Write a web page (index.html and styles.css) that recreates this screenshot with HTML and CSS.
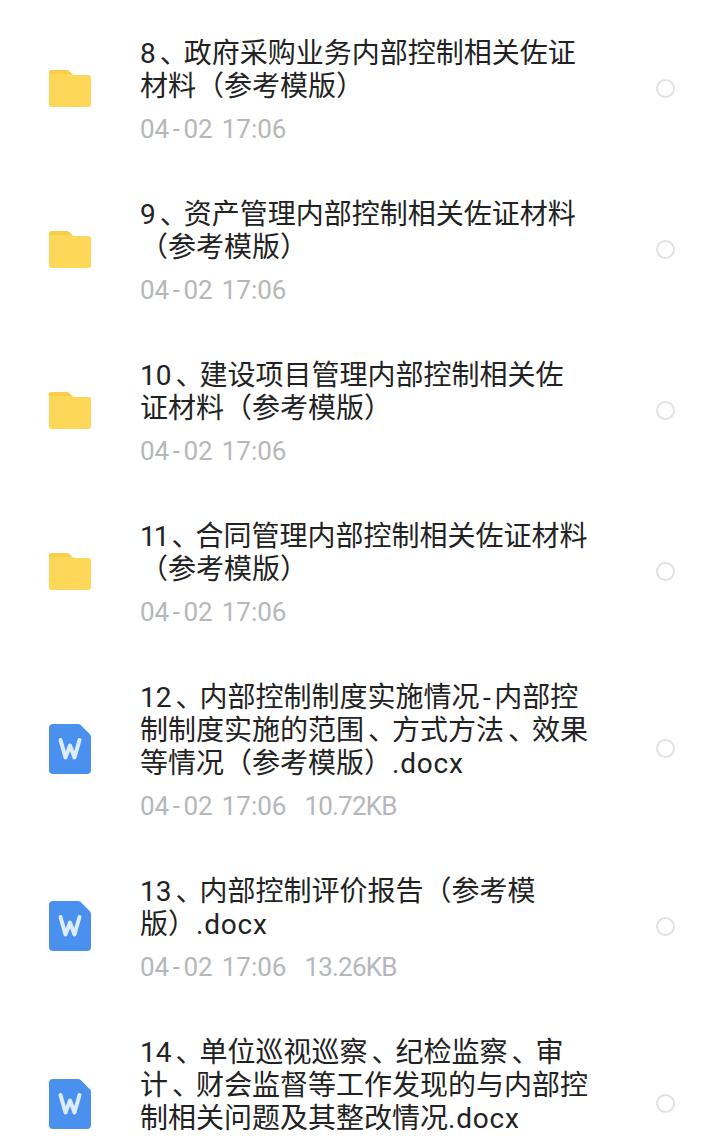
FILE: index.html
```html
<!DOCTYPE html>
<html lang="zh-CN">
<head>
    <meta charset="UTF-8">
    <meta name="viewport" content="width=device-width, initial-scale=1.0">
    <title>文件列表</title>
    <link rel="stylesheet" href="styles.css">
</head>
<body>
    <svg class="defs" width="0" height="0" aria-hidden="true">
        <symbol id="folder" viewBox="0 0 42 37">
            <path d="M3 0H17C19 0 20 .8 21.500 2.500C23 4.200 24 5 26 5H39C41 5 42 6 42 8V34C42 36 41 37 39 37H3C1 37 0 36 0 34V3C0 1 1 0 3 0Z" fill="#fdd757"/>
            <path d="M3 0H17C19 0 20 .8 21.500 2.500L23 4H0V3C0 1 1 0 3 0Z" fill="#f9cd4a"/>
        </symbol>
        <symbol id="word" viewBox="0 0 42 50">
            <path d="M4 0H29C30 0 31 .4 31.700 1.100L40.900 10.300C41.600 11 42 12 42 13V46C42 48.500 40.500 50 38 50H4C1.500 50 0 48.500 0 46V4C0 1.500 1.500 0 4 0Z" fill="#4a90ee"/>
            <path d="M11.500 16L16.500 33.500L21 21.500L25.500 33.500L30.500 16" fill="none" stroke="#dcecfc" stroke-width="4" stroke-linecap="round" stroke-linejoin="round"/>
        </symbol>
    </svg>

    <ul class="file-list">
        <li class="file-row">
            <svg class="icon-folder"><use href="#folder"/></svg>
            <div class="file-info">
                <div class="file-name">8<span class="pause">、</span>政府采购业务内部控制相关佐证<br>材料（参考模版）</div>
                <div class="file-meta"><span>04<span class="dash">-</span>02</span><span>17:06</span></div>
            </div>
            <span class="radio"></span>
        </li>
        <li class="file-row">
            <svg class="icon-folder"><use href="#folder"/></svg>
            <div class="file-info">
                <div class="file-name">9<span class="pause">、</span>资产管理内部控制相关佐证材料<br>（参考模版）</div>
                <div class="file-meta"><span>04<span class="dash">-</span>02</span><span>17:06</span></div>
            </div>
            <span class="radio"></span>
        </li>
        <li class="file-row">
            <svg class="icon-folder"><use href="#folder"/></svg>
            <div class="file-info">
                <div class="file-name">10<span class="pause">、</span>建设项目管理内部控制相关佐<br>证材料（参考模版）</div>
                <div class="file-meta"><span>04<span class="dash">-</span>02</span><span>17:06</span></div>
            </div>
            <span class="radio"></span>
        </li>
        <li class="file-row">
            <svg class="icon-folder"><use href="#folder"/></svg>
            <div class="file-info">
                <div class="file-name"><span class="narrow">11</span><span class="pause">、</span>合同管理内部控制相关佐证材料<br>（参考模版）</div>
                <div class="file-meta"><span>04<span class="dash">-</span>02</span><span>17:06</span></div>
            </div>
            <span class="radio"></span>
        </li>
        <li class="file-row">
            <svg class="icon-word"><use href="#word"/></svg>
            <div class="file-info">
                <div class="file-name">12<span class="pause">、</span>内部控制制度实施情况<span class="dash">-</span>内部控<br>制制度实施的范围<span class="pause">、</span>方式方法<span class="pause">、</span>效果<br>等情况（参考模版）<span class="ext">.docx</span></div>
                <div class="file-meta"><span>04<span class="dash">-</span>02</span><span>17:06</span><span class="size">10.72KB</span></div>
            </div>
            <span class="radio"></span>
        </li>
        <li class="file-row">
            <svg class="icon-word"><use href="#word"/></svg>
            <div class="file-info">
                <div class="file-name">13<span class="pause">、</span>内部控制评价报告（参考模<br>版）<span class="ext">.docx</span></div>
                <div class="file-meta"><span>04<span class="dash">-</span>02</span><span>17:06</span><span class="size">13.26KB</span></div>
            </div>
            <span class="radio"></span>
        </li>
        <li class="file-row">
            <svg class="icon-word"><use href="#word"/></svg>
            <div class="file-info">
                <div class="file-name">14<span class="pause">、</span>单位巡视巡察<span class="pause">、</span>纪检监察<span class="pause">、</span>审<br>计<span class="pause">、</span>财会监督等工作发现的与内部控<br>制相关问题及其整改情况<span class="ext">.docx</span></div>
                <!-- this row's date falls below the bottom of the screen -->
                <div class="file-meta"></div>
            </div>
            <span class="radio"></span>
        </li>
    </ul>
</body>
</html>
```

FILE: styles.css
```css
/* Page */
html, body {
    margin: 0;
    padding: 0;
    height: 1136px;
    overflow: hidden;
    background-color: #fff;
}

body {
    font-family: "Roboto", "Noto Sans CJK SC", sans-serif;
}

.defs {
    position: absolute;
}

/* File list */
.file-list {
    list-style: none;
    margin: 0;
    padding: 36px 0 0 49px;
    display: flex;
    flex-direction: column;
    gap: 57px;
}

.file-row {
    display: flex;
    align-items: center;
}

.icon-folder,
.icon-word {
    flex: none;
    width: 42px;
}

.icon-folder {
    height: 37px;
}

.icon-word {
    height: 50px;
}

.file-info {
    flex: none;
    width: 449px;
    margin-left: 49px;
}

.file-name {
    padding-top: 1px;
    font-size: 28px;
    line-height: 33px;
    color: #222;
}

/* the 、 sits further right in its cell than in this font */
.pause {
    padding-left: 4px;
    letter-spacing: -4px;
}

.dash {
    margin: 0 3.500px;
}

.narrow {
    letter-spacing: -2px;
}

.ext {
    letter-spacing: 0.800px;
}

.file-meta {
    display: flex;
    gap: 9px;
    min-height: 22px;
    margin-top: 15px;
    font-size: 26px;
    line-height: 22px;
    color: #b4b8bb;
}

.file-meta .size {
    margin-left: 9px;
    letter-spacing: -0.800px;
}

/* Select circle */
.radio {
    flex: none;
    box-sizing: border-box;
    width: 19px;
    height: 19px;
    margin-left: 67px;
    border: 2px solid #e2e2e2;
    border-radius: 50%;
}
```
